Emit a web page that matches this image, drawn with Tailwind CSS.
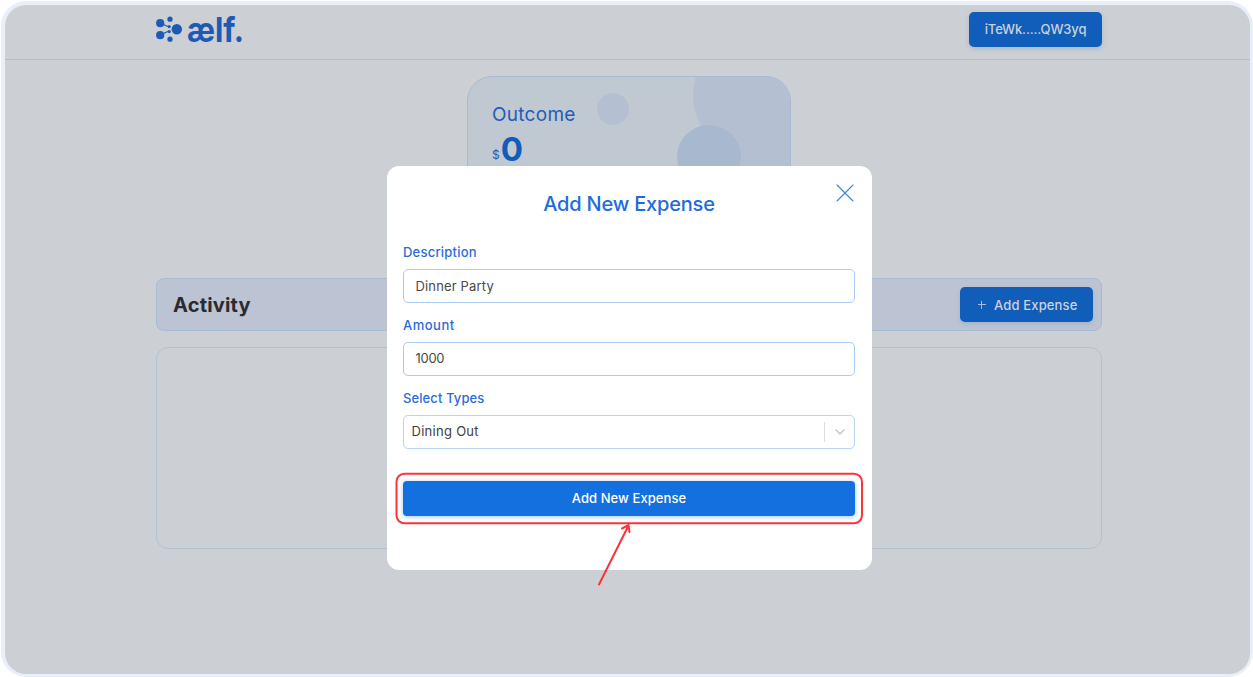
<!DOCTYPE html>
<html lang="en">
<head>
<meta charset="utf-8">
<title>Expense Tracker</title>
<script src="https://cdn.jsdelivr.net/npm/@tailwindcss/browser@4"></script>
</head>
<body class="w-[1253px] h-[677px] overflow-hidden bg-white font-['Inter','Liberation_Sans',sans-serif]">
<div class="relative w-[1253px] h-[677px] pl-px pt-px">
  <div class="w-[1252px] h-[676px] rounded-[25px] bg-[#e8effa] pl-1 pt-1">
    <div class="w-[1245px] h-[669px] rounded-[21px] bg-[#cccfd4] overflow-hidden">
      <header class="h-[55px] border-b border-[#afbdcd]">
        <div class="ml-[151px] w-[946px] flex items-start justify-between pt-[7px]">
          <svg class="w-[90px] h-[42px] mt-0.5 overflow-visible" viewBox="0 0 90 42" fill="#1d59b5">
            <g stroke="#1d59b5" stroke-width="1.2"><path d="M4 9L13 13M4 21L13 17"/></g>
            <circle cx="4.2" cy="9.2" r="4.1"/><circle cx="4.2" cy="21.2" r="4.1"/>
            <circle cx="14" cy="5.2" r="2.6"/><circle cx="14" cy="25.2" r="2.6"/>
            <circle cx="13.2" cy="12.6" r="1.6"/><circle cx="13.2" cy="17.6" r="1.6"/>
            <circle cx="20.8" cy="15.2" r="5.2"/>
            <text x="31" y="28" font-family="Inter" font-weight="700" font-size="34" textLength="57" lengthAdjust="spacingAndGlyphs">ælf.</text>
          </svg>
          <button class="w-[133px] h-[35px] rounded-[5px] bg-[#105dba] text-[#cbd2dc] text-[13px] tracking-[-0.12px] font-medium shadow-[0_2px_4px_#8fa9ca99]">iTeWk.....QW3yq</button>
        </div>
      </header>
      <main class="ml-[151px] w-[946px] pt-4">
        <section class="relative mx-auto w-[324px] h-[186px] rounded-[25px] border border-[#a6bad3] bg-[#c0c8d2] overflow-hidden">
          <div class="absolute left-[225px] -top-[47px] w-[130px] h-[130px] rounded-full bg-[#b4c0d1]"></div>
          <div class="absolute left-[260px] top-0 w-[64px] h-[186px] bg-[#b4c0d1]"></div>
          <div class="absolute left-[129px] top-4 size-8 rounded-full bg-[#b4c0d1]"></div>
          <div class="absolute left-[209px] top-[48px] size-16 rounded-full bg-[#a7b8cf]"></div>
          <div class="relative pl-6 pt-6 text-[#235cb8]">
            <div class="text-[19px] leading-[28px] tracking-[0.27px]">Outcome</div>
            <div class="-mt-px flex items-baseline gap-px leading-[42px]"><span class="relative -top-0.5 text-[12px]">$</span><span class="text-[33px] font-bold text-[#105dba] tracking-tight">0</span></div>
          </div>
        </section>
        <section class="mt-4 h-[53px] rounded-[8px] border border-[#a6bad3] bg-[#bcc4d3] flex items-center justify-between pl-4 pr-2">
          <h2 class="text-[20px] font-bold tracking-[0.2px] text-[#292b30]">Activity</h2>
          <button class="w-[133px] h-[35px] rounded-[5px] bg-[#105dba] text-[#cbd2dc] text-[13px] font-medium shadow-[0_2px_4px_#8fa9ca99] flex items-center pl-[18px]">
            <svg class="size-2 mr-2" viewBox="0 0 8 8" stroke="#a5bbd8" stroke-width="1"><path d="M0 3.5H8M3.5 0V8"/></svg>
            <span class="relative top-px tracking-[0.15px]">Add Expense</span>
          </button>
        </section>
        <section class="mt-4 h-[202px] rounded-[12px] border border-[#b2c0d0]"></section>
      </main>
    </div>
  </div>

  <div class="absolute left-[386.5px] top-[166px] w-[485px] h-[404px] rounded-[12px] bg-white px-[16.5px]" role="dialog">
    <svg class="absolute left-[449px] top-[18px] size-[18px]" viewBox="0 0 18 18" stroke="#3c86e0" stroke-width="1.1" stroke-linecap="round"><path d="M1 1L17 17M17 1L1 17"/></svg>
    <h1 class="pt-[23px] leading-[30px] text-center text-[20px] tracking-[-0.2px] font-medium text-[#1d6bdc]">Add New Expense</h1>
    <label class="block mt-[23px] h-[21px] leading-[21px] text-[13px] tracking-[0.22px] font-medium text-[#2b6bd9]">Description</label>
    <div class="mt-[6px] h-[34px] rounded-[5px] border border-[#a9ccf4] pl-[11.5px] leading-[32px] text-[13px] tracking-[0.15px] text-[#494949]">Dinner Party</div>
    <label class="block mt-3 h-[21px] leading-[21px] text-[13px] tracking-[0.5px] font-medium text-[#2b6bd9]">Amount</label>
    <div class="mt-[6px] h-[34px] rounded-[5px] border border-[#a9ccf4] pl-[11.5px] leading-[31px] text-[13px] tracking-[-0.3px] text-[#494949]">1000</div>
    <label class="block mt-3 h-[21px] leading-[21px] text-[13px] tracking-[0.1px] font-medium text-[#2b6bd9]">Select Types</label>
    <div class="mt-[6px] h-[34px] rounded-[5px] border border-[#b8d5f7] pl-[7.5px] flex items-center text-[13px] tracking-[0.28px] text-[#404040]">
      <span>Dining Out</span>
      <span class="ml-auto w-px h-5 bg-[#dddddd]"></span>
      <svg class="ml-[9px] mr-2 w-3 h-3" viewBox="0 0 12 12" fill="none" stroke="#cccccc" stroke-width="1.7" stroke-linecap="round"><path d="M2 4L6 7.8L10 4"/></svg>
    </div>
    <button class="mt-8 block w-full h-[35px] rounded-[4px] bg-[#1570df] text-white text-[13px] tracking-[0.07px] font-medium shadow-[0_1px_5px_#1570df66]">Add New Expense</button>
  </div>

  <svg class="absolute left-[390px] top-[466px] w-[480px] h-[124px]" viewBox="390 466 480 124" fill="none" stroke="#fb3438" stroke-width="2" stroke-linecap="round">
    <rect x="396.5" y="473.7" width="465.5" height="49.6" rx="8"/>
    <path d="M599 584.5L628.5 525.5M622 528.5L628.5 525L629.5 532"/>
  </svg>
</div>
</body>
</html>
